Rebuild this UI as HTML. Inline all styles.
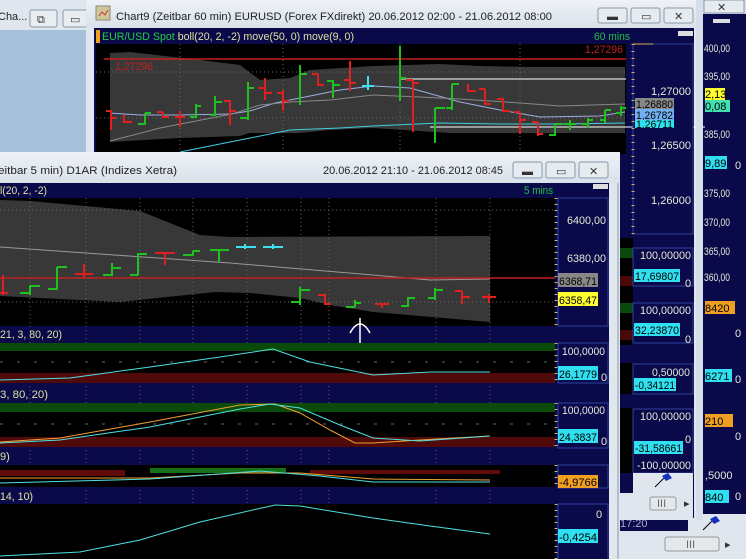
<!DOCTYPE html>
<html><head><meta charset="utf-8"><style>
html,body{margin:0;padding:0;background:#a9c1dc;width:746px;height:559px;overflow:hidden}
svg{display:block}
text{font-family:"Liberation Sans",sans-serif;font-size:11px}
</style></head><body>
<svg width="746" height="559" viewBox="0 0 746 559" xmlns="http://www.w3.org/2000/svg">
<defs>
<linearGradient id="tb" x1="0" y1="0" x2="0" y2="1"><stop offset="0" stop-color="#eef2f7"/><stop offset="1" stop-color="#d9e1ea"/></linearGradient>
</defs>
<!-- left background window -->
<rect x="0" y="0" width="90" height="30" fill="#dfe6ee"/>
<text x="-2" y="20" fill="#222" font-size="12">Cha...</text>
<rect x="30" y="10" width="27" height="17" rx="2" fill="#e8edf2" stroke="#8a99aa"/>
<rect x="63" y="10" width="24" height="17" rx="2" fill="#e8edf2" stroke="#8a99aa"/>
<text x="37" y="23" font-size="10" fill="#333">⧉</text><text x="70" y="23" font-size="10" fill="#333">▭</text>
<rect x="0" y="30" width="88" height="122" fill="#a7c0dc"/>

<!-- far right window -->
<rect x="696" y="0" width="50" height="559" fill="#d6dfe9"/>
<rect x="704" y="0" width="40" height="13" fill="#e6ebf0" stroke="#8a99aa"/>
<text x="717" y="11" font-size="10" fill="#333">✕</text>
<rect x="703" y="14" width="43" height="500" fill="#0a0a4a"/>
<rect x="713" y="19" width="17" height="4" fill="#ddd"/>
<g fill="#e8e8d8" font-size="11">
<text x="704" y="52" textLength="26" lengthAdjust="spacingAndGlyphs">400,00</text><text x="704" y="80" textLength="26" lengthAdjust="spacingAndGlyphs">395,00</text><text x="704" y="138" textLength="26" lengthAdjust="spacingAndGlyphs">385,00</text>
<text x="704" y="197" textLength="26" lengthAdjust="spacingAndGlyphs">375,00</text><text x="704" y="226" textLength="26" lengthAdjust="spacingAndGlyphs">370,00</text><text x="704" y="255" textLength="26" lengthAdjust="spacingAndGlyphs">365,00</text><text x="704" y="281" textLength="26" lengthAdjust="spacingAndGlyphs">360,00</text>
<text x="735" y="169">0</text><text x="735" y="337">0</text><text x="735" y="383">0</text><text x="735" y="440">0</text><text x="735" y="500">0</text>
</g>
<rect x="705" y="88" width="20" height="12" fill="#ffff30"/><text x="705" y="98" fill="#000">2,13</text>
<rect x="705" y="100" width="25" height="12" fill="#40e0b0"/><text x="705" y="110" fill="#000">0,08</text>
<rect x="705" y="156" width="22" height="13" fill="#30e0f0"/><text x="705" y="167" fill="#000">9,89</text>
<rect x="705" y="301" width="30" height="13" fill="#f0a020"/><text x="705" y="312" fill="#000">8420</text>
<rect x="705" y="369" width="27" height="13" fill="#30e0f0"/><text x="705" y="380" fill="#000">6271</text>
<rect x="705" y="414" width="28" height="13" fill="#f0a020"/><text x="705" y="425" fill="#000">210</text>
<text x="705" y="479" fill="#e8e8d8">,5000</text>
<rect x="705" y="490" width="24" height="13" fill="#30e0f0"/><text x="705" y="501" fill="#000">840</text>
<rect x="618" y="514" width="128" height="45" fill="#dfe6ee"/>
<rect x="618" y="514" width="70" height="17" fill="#0a0a4a"/>
<text x="620" y="527" fill="#aac" font-size="12">17:20</text>
<path d="M703 530 L713 520" stroke="#000"/><path d="M710 519 l6 -3 l4 5 l-6 3z" fill="#1830c0"/>
<rect x="665" y="537" width="54" height="14" rx="2" fill="#e4e8ec" stroke="#999"/>
<text x="686" y="548" font-size="9" fill="#666">III</text>
<text x="725" y="548" font-size="9" fill="#333">▸</text>

<!-- Chart9 window -->
<rect x="86" y="0" width="612" height="520" rx="6" fill="#dfe6ee"/>
<rect x="86" y="0" width="612" height="28" fill="url(#tb)"/>
<rect x="96" y="6" width="14" height="14" fill="#cfc79a" stroke="#887"/>
<path d="M99 16 l3 -4 l3 3 l3 -5" stroke="#c33" fill="none"/>
<text x="116" y="20" fill="#222" font-size="12.5" textLength="436" lengthAdjust="spacingAndGlyphs">Chart9 (Zeitbar 60 min)  EURUSD (Forex FXdirekt) 20.06.2012 02:00 - 21.06.2012 08:00</text>
<g fill="#e6ebf0" stroke="#8a99aa"><rect x="598" y="8" width="29" height="15" rx="2"/><rect x="631" y="8" width="29" height="15" rx="2"/><rect x="664" y="8" width="29" height="15" rx="2"/></g>
<g fill="#333" font-size="10"><text x="607" y="20">▬</text><text x="641" y="20">▭</text><text x="674" y="20">✕</text></g>
<rect x="94" y="28" width="600" height="490" fill="#0a0a4a"/>
<rect x="96" y="30" width="4" height="13" fill="#f0a020"/>
<text x="102" y="40" fill="#20d040" textLength="252" lengthAdjust="spacingAndGlyphs">EUR/USD Spot <tspan fill="#e0e0a0">boll(20, 2, -2) move(50, 0) move(9, 0)</tspan></text>
<text x="594" y="40" fill="#20c040" textLength="36" lengthAdjust="spacingAndGlyphs">60 mins</text>
<rect x="678" y="31" width="15" height="5" fill="#ddd"/>
<rect x="96" y="44" width="530" height="110" fill="#000"/>
<polygon points="110,53 130,52 200,60 240,65 260,80 290,78 310,70 373,66 440,64 480,66 530,67 625,67 625,140 560,137 520,137 450,133 373,128 330,130 300,133 250,133 240,136 180,138 110,142" fill="#383838"/>
<rect x="250" y="133" width="375" height="20" fill="#000"/>
<g stroke="#666" stroke-dasharray="1,3"><line x1="96" y1="72" x2="626" y2="72"/><line x1="96" y1="118" x2="626" y2="118"/><line x1="180" y1="44" x2="180" y2="154"/><line x1="283" y1="44" x2="283" y2="154"/><line x1="400" y1="44" x2="400" y2="154"/><line x1="520" y1="44" x2="520" y2="154"/></g>
<line x1="104" y1="59" x2="626" y2="59" stroke="#c02020" stroke-width="1.5"/>
<text x="115" y="70" fill="#c02020" textLength="38" lengthAdjust="spacingAndGlyphs">1,27296</text>
<text x="585" y="53" fill="#c02020" textLength="38" lengthAdjust="spacingAndGlyphs">1,27296</text>
<polyline points="110,113 140,115 180,115 230,114 250,111 275,103 300,98 340,90 373,86 410,88 460,102 500,110 540,117 600,116 625,112" stroke="#9ab0e0" fill="none"/>
<polyline points="110,141 160,128 232,114 260,105 290,102 330,100 373,95 420,97 460,99 520,103 560,106 625,104" stroke="#888" fill="none"/>
<polyline points="180,152 250,138 290,130 340,128 373,126 440,123 500,124 560,124 625,123" stroke="#40d0e0" fill="none"/>
<line x1="400" y1="79" x2="626" y2="79" stroke="#fff"/>
<line x1="430" y1="127" x2="705" y2="127" stroke="#fff"/>
<g stroke-width="2" fill="none">
<path d="M111 110v20M106 111h5M111 118h5" stroke="#e02020"/>
<path d="M124 115v8M124 122h8" stroke="#e02020"/>
<path d="M145 113v12M138 124h7M145 113h6" stroke="#20c020"/>
<path d="M163 112v6M157 112h6M163 117h6" stroke="#e02020"/>
<path d="M180 111v16M175 117h10" stroke="#e02020"/>
<path d="M196 104v14M190 117h6M196 106h5" stroke="#20c020"/>
<path d="M215 96v20M210 115h5M215 102h7" stroke="#20c020"/>
<path d="M230 100v25M224 101h6M230 111h6" stroke="#e02020"/>
<path d="M248 82v38M240 118h8M248 88h6" stroke="#20c020"/>
<path d="M265 78v22M258 88h7M265 93h7" stroke="#e02020"/>
<path d="M283 90v21M277 93h6M283 101h6" stroke="#e02020"/>
<path d="M300 65v40M300 74h7" stroke="#20c020"/>
<path d="M318 74v12M312 74h6M318 85h6" stroke="#e02020"/>
<path d="M333 80v18M327 81h6M333 85h7" stroke="#20c020"/>
<path d="M350 61v30M344 80h6M350 83h6" stroke="#e02020"/>
<path d="M368 76v14M362 86h12" stroke="#40e0f0"/>
<path d="M400 46v55M400 78h6" stroke="#20c020"/>
<path d="M413 80v52M406 80h7M413 83h6" stroke="#e02020"/>
<path d="M435 108v35M435 108h10" stroke="#20c020"/>
<path d="M452 84v26M446 108h6M452 84h7" stroke="#20c020"/>
<path d="M468 84v8M468 91h8" stroke="#e02020"/>
<path d="M485 89v16M479 89h6M485 104h6" stroke="#e02020"/>
<path d="M503 98v14M497 99h6M503 111h7" stroke="#e02020"/>
<path d="M520 112v22M514 112h6M520 120h6" stroke="#e02020"/>
<path d="M538 122v14M532 122h6M538 134h5" stroke="#e02020"/>
<path d="M555 125v11M549 135h6M555 124h7" stroke="#20c020"/>
<path d="M570 120v10M564 124h12" stroke="#20c020"/>
<path d="M588 118v10M582 124h6M588 120h5" stroke="#20c020"/>
<path d="M605 110v13M600 120h5M605 110h6" stroke="#20c020"/>
<path d="M621 106v10M616 113h5M621 108h5" stroke="#20c020"/>
</g>
<rect x="633" y="44" width="60" height="190" fill="#0a0a4a" stroke="#3040a0"/>
<line x1="633" y1="44" x2="633" y2="234" stroke="#d0b060" stroke-dasharray="1,6" stroke-width="3"/>
<line x1="633" y1="44" x2="653" y2="44" stroke="#d0b060"/>
<g fill="#e8e8d8"><text x="651" y="95" textLength="40" lengthAdjust="spacingAndGlyphs">1,27000</text><text x="651" y="149" textLength="40" lengthAdjust="spacingAndGlyphs">1,26500</text><text x="651" y="204" textLength="40" lengthAdjust="spacingAndGlyphs">1,26000</text></g>
<rect x="635" y="98" width="39" height="11" fill="#888"/><text x="636" y="108" fill="#000" textLength="37" lengthAdjust="spacingAndGlyphs">1,26880</text>
<rect x="635" y="109" width="39" height="11" fill="#70b0f0"/><text x="636" y="119" fill="#000" textLength="37" lengthAdjust="spacingAndGlyphs">1,26782</text>
<rect x="635" y="120" width="39" height="8" fill="#30e0f0"/><text x="636" y="128" fill="#000" font-size="10" textLength="37" lengthAdjust="spacingAndGlyphs">1,26711</text>
<!-- chart9 lower panels visible area -->
<rect x="618" y="238" width="15" height="280" fill="#000"/>
<rect x="618" y="248" width="15" height="10" fill="#0a4a0a"/><rect x="618" y="276" width="15" height="10" fill="#4a0a0a"/>
<rect x="618" y="303" width="15" height="10" fill="#0a4a0a"/><rect x="618" y="330" width="15" height="10" fill="#4a0a0a"/>
<rect x="618" y="345" width="15" height="18" fill="#0a0a4a"/><rect x="618" y="394" width="15" height="14" fill="#0a0a4a"/>
<g fill="#0a0a4a" stroke="#3040a0">
<rect x="633" y="248" width="60" height="38"/><rect x="633" y="303" width="60" height="40"/><rect x="633" y="364" width="60" height="30"/><rect x="633" y="409" width="60" height="64"/></g>
<g fill="#e8e8d8"><text x="640" y="259" textLength="51" lengthAdjust="spacingAndGlyphs">100,00000</text><text x="685" y="287">0</text><text x="640" y="314" textLength="51" lengthAdjust="spacingAndGlyphs">100,00000</text><text x="685" y="343">0</text><text x="652" y="376" textLength="38" lengthAdjust="spacingAndGlyphs">0,50000</text><text x="640" y="420" textLength="51" lengthAdjust="spacingAndGlyphs">100,00000</text><text x="685" y="443">0</text><text x="637" y="469" textLength="54" lengthAdjust="spacingAndGlyphs">-100,00000</text></g>
<rect x="634" y="269" width="46" height="13" fill="#30e0f0"/><text x="635" y="280" fill="#000" textLength="44" lengthAdjust="spacingAndGlyphs">17,69807</text>
<rect x="634" y="323" width="46" height="13" fill="#30e0f0"/><text x="635" y="334" fill="#000" textLength="44" lengthAdjust="spacingAndGlyphs">32,23870</text>
<rect x="634" y="378" width="42" height="13" fill="#30e0f0"/><text x="635" y="389" fill="#000" textLength="40" lengthAdjust="spacingAndGlyphs">-0,34121</text>
<rect x="634" y="441" width="49" height="13" fill="#30e0f0"/><text x="635" y="452" fill="#000" textLength="47" lengthAdjust="spacingAndGlyphs">-31,58661</text>
<rect x="618" y="473" width="75" height="45" fill="#dfe6ee"/>
<rect x="618" y="473" width="15" height="20" fill="#0a0a4a"/>
<path d="M655 487 L665 477" stroke="#000"/><path d="M662 476 l6 -3 l4 5 l-6 3z" fill="#1830c0"/>
<rect x="650" y="497" width="26" height="13" rx="2" fill="#e4e8ec" stroke="#999"/>
<text x="657" y="507" font-size="8" fill="#666">III</text><text x="684" y="507" font-size="8" fill="#333">▸</text>
<rect x="696" y="0" width="6" height="520" fill="#d6dfe9"/>

<!-- front window -->
<rect x="-10" y="152" width="630" height="420" rx="6" fill="#dfe6ee"/>
<rect x="-10" y="152" width="630" height="31" fill="url(#tb)"/>
<text x="-2" y="174" fill="#222" font-size="12.5" textLength="179" lengthAdjust="spacingAndGlyphs">eitbar 5 min)  D1AR (Indizes Xetra)</text>
<text x="323" y="174" fill="#222" font-size="12.5" textLength="180" lengthAdjust="spacingAndGlyphs">20.06.2012 21:10 - 21.06.2012 08:45</text>
<g fill="#e6ebf0" stroke="#8a99aa"><rect x="513" y="162" width="29" height="16" rx="2"/><rect x="546" y="162" width="29" height="16" rx="2"/><rect x="579" y="162" width="29" height="16" rx="2"/></g>
<g fill="#333" font-size="10"><text x="522" y="175">▬</text><text x="556" y="175">▭</text><text x="589" y="175">✕</text></g>
<rect x="0" y="183" width="610" height="376" fill="#0a0a4a"/>
<text x="0" y="194" fill="#e0e0a0" textLength="47" lengthAdjust="spacingAndGlyphs">l(20, 2, -2)</text>
<text x="524" y="194" fill="#20c040" textLength="29" lengthAdjust="spacingAndGlyphs">5 mins</text>
<rect x="593" y="184" width="15" height="5" fill="#ddd"/>
<rect x="0" y="198" width="555" height="128" fill="#000"/>
<polygon points="0,200 30,201 140,211 200,235 230,237 490,236 490,322 373,312 330,305 300,298 250,293 215,292 120,302 0,296" fill="#383838"/>
<g stroke="#666" stroke-dasharray="1,3"><line x1="0" y1="210" x2="555" y2="210"/><line x1="0" y1="302" x2="555" y2="302"/>
<line x1="30" y1="198" x2="30" y2="559"/><line x1="86" y1="198" x2="86" y2="559"/><line x1="140" y1="198" x2="140" y2="559"/><line x1="193" y1="198" x2="193" y2="559"/><line x1="247" y1="198" x2="247" y2="559"/><line x1="301" y1="198" x2="301" y2="559"/><line x1="329" y1="198" x2="329" y2="559"/><line x1="436" y1="198" x2="436" y2="559"/><line x1="490" y1="198" x2="490" y2="559"/></g>
<polyline points="0,247 100,254 230,263 373,275 430,280 490,279" stroke="#999" fill="none"/>
<line x1="0" y1="278" x2="555" y2="278" stroke="#c02020" stroke-width="1.5"/>
<g stroke-width="2" fill="none">
<path d="M3 275v20M0 293h8" stroke="#e02020"/>
<path d="M30 285v10M20 293h10M30 286h10" stroke="#20c020"/>
<path d="M57 267v23M48 289h9M57 267h10" stroke="#20c020"/>
<path d="M84 264v14M75 274h18" stroke="#e02020"/>
<path d="M112 263v13M103 275h9M112 268h9" stroke="#20c020"/>
<path d="M138 253v22M130 275h8M138 254h9" stroke="#20c020"/>
<path d="M165 253v12M155 253h20" stroke="#e02020"/>
<path d="M193 251v5M183 255h10M193 251h7" stroke="#20c020"/>
<path d="M219 249v13M210 250h19" stroke="#20c020"/>
<path d="M245 244v5M236 247h20" stroke="#40e0f0"/>
<path d="M273 244v5M263 247h20" stroke="#40e0f0"/>
<path d="M300 287v18M291 302h9M300 290h10" stroke="#20c020"/>
<path d="M325 294v11M318 295h7M325 304h6" stroke="#e02020"/>
<path d="M355 300v7M346 307h9M355 303h6" stroke="#20c020"/>
<path d="M382 303v5M375 304h14" stroke="#e02020"/>
<path d="M408 297v10M401 306h7M408 298h7" stroke="#20c020"/>
<path d="M435 288v12M428 298h7M435 290h8" stroke="#20c020"/>
<path d="M462 291v13M455 291h7M462 297h8" stroke="#e02020"/>
<path d="M489 294v9M482 297h14" stroke="#e02020"/>
</g>
<path d="M350 333 Q360 315 370 333 M360 318v28" stroke="#fff" fill="none" stroke-width="1.5"/>
<rect x="558" y="198" width="50" height="128" fill="#0a0a4a" stroke="#3040a0"/>
<line x1="556" y1="198" x2="556" y2="326" stroke="#d0b060" stroke-dasharray="1,5" stroke-width="3"/>
<g fill="#e8e8d8"><text x="567" y="224" textLength="39" lengthAdjust="spacingAndGlyphs">6400,00</text><text x="567" y="262" textLength="39" lengthAdjust="spacingAndGlyphs">6380,00</text></g>
<rect x="558" y="273" width="40" height="14" fill="#888"/><text x="559" y="285" fill="#000" textLength="38" lengthAdjust="spacingAndGlyphs">6368,71</text>
<rect x="558" y="292" width="40" height="14" fill="#ffff30"/><text x="559" y="304" fill="#000" textLength="38" lengthAdjust="spacingAndGlyphs">6358,47</text>
<text x="0" y="338" fill="#e0e0a0" textLength="62" lengthAdjust="spacingAndGlyphs">21, 3, 80, 20)</text>
<!-- panel 1 -->
<rect x="0" y="343" width="555" height="40" fill="#000"/>
<rect x="0" y="343" width="555" height="8" fill="#0a4a0a"/><rect x="0" y="373" width="555" height="10" fill="#500a0a"/>
<line x1="0" y1="362" x2="555" y2="362" stroke="#666" stroke-dasharray="3,14"/>
<polyline points="0,380 70,378 150,367 220,357 273,349 310,362 373,375 430,372 490,372" stroke="#50e0e0" fill="none"/>
<text x="0" y="398" fill="#e0e0a0" textLength="48" lengthAdjust="spacingAndGlyphs">3, 80, 20)</text>
<!-- panel 2 -->
<rect x="0" y="403" width="555" height="44" fill="#000"/>
<rect x="0" y="403" width="555" height="9" fill="#0a4a0a"/><rect x="0" y="437" width="555" height="10" fill="#500a0a"/>
<line x1="0" y1="424" x2="555" y2="424" stroke="#666" stroke-dasharray="3,14"/>
<polyline points="0,442 60,438 150,422 240,405 275,404 300,413 330,430 355,443 373,443 420,440 490,436" stroke="#f0a030" fill="none"/>
<polyline points="0,443 60,440 150,427 240,409 270,404 300,408 340,425 373,438 420,441 490,436" stroke="#50e0e0" fill="none"/>
<text x="0" y="460" fill="#e0e0a0">9)</text>
<!-- panel 3 -->
<rect x="0" y="465" width="555" height="22" fill="#000"/>
<rect x="0" y="470" width="125" height="6" fill="#600a0a"/><rect x="150" y="468" width="136" height="5" fill="#187018"/><rect x="310" y="470" width="190" height="4" fill="#600a0a"/>
<polyline points="0,478 150,478 240,473 300,473 373,479 490,480" stroke="#f0a030" fill="none"/>
<polyline points="0,483 150,479 260,471 320,476 373,482 490,482" stroke="#50e0e0" fill="none"/>
<text x="0" y="500" fill="#e0e0a0" textLength="33" lengthAdjust="spacingAndGlyphs">14, 10)</text>
<!-- panel 4 -->
<rect x="0" y="504" width="555" height="55" fill="#000"/>
<polyline points="0,556 80,552 140,540 200,522 275,505 300,506 373,518 430,526 490,534" stroke="#50e0e0" fill="none"/>
<g fill="#0a0a4a" stroke="#3040a0"><rect x="558" y="343" width="50" height="40"/><rect x="558" y="403" width="50" height="45"/><rect x="558" y="465" width="50" height="23"/><rect x="558" y="504" width="50" height="60"/></g>
<g stroke="#d0b060" stroke-width="3" stroke-dasharray="1,5"><line x1="556" y1="343" x2="556" y2="383"/><line x1="556" y1="403" x2="556" y2="447"/><line x1="556" y1="465" x2="556" y2="487"/><line x1="556" y1="504" x2="556" y2="559"/></g>
<g fill="#e8e8d8"><text x="562" y="355" textLength="43" lengthAdjust="spacingAndGlyphs">100,0000</text><text x="601" y="381">0</text><text x="562" y="414" textLength="43" lengthAdjust="spacingAndGlyphs">100,0000</text><text x="601" y="445">0</text><text x="596" y="518">0</text></g>
<rect x="558" y="366" width="40" height="14" fill="#30e0f0"/><text x="559" y="378" fill="#000" textLength="38" lengthAdjust="spacingAndGlyphs">26,1779</text>
<rect x="558" y="429" width="40" height="14" fill="#30e0f0"/><text x="559" y="441" fill="#000" textLength="38" lengthAdjust="spacingAndGlyphs">24,3837</text>
<rect x="558" y="475" width="40" height="13" fill="#f0a020"/><text x="559" y="486" fill="#000" textLength="38" lengthAdjust="spacingAndGlyphs">-4,9766</text>
<rect x="558" y="529" width="40" height="14" fill="#30e0f0"/><text x="559" y="541" fill="#000" textLength="38" lengthAdjust="spacingAndGlyphs">-0,4254</text>
<rect x="609" y="183" width="9" height="376" fill="#dfe6ee"/>
<line x1="618" y1="183" x2="618" y2="559" stroke="#8a99aa"/>
</svg>
</body></html>
